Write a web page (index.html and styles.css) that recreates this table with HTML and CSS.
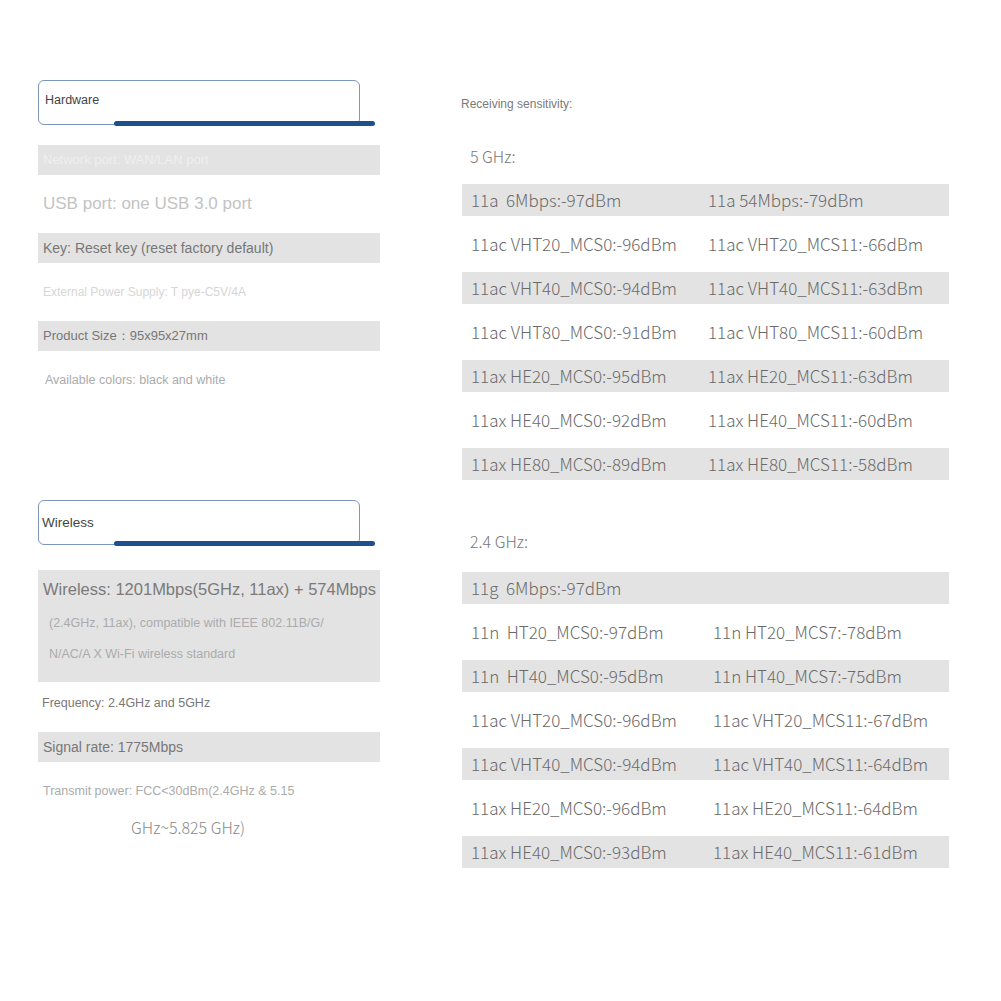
FILE: index.html
```html
<!DOCTYPE html>
<html lang="en">
	<head>
		<meta charset="utf-8">
		<title>Specifications</title>
		<link rel="stylesheet" href="styles.css">
	</head>
	<body>

		<div id="page">

			<div class="leftCol">

				<div class="sectionHead">
					<div class="headBox">Hardware</div>
					<div class="headBar"></div>
				</div>

				<div class="specs">
					<div class="row gray ghost">Network port: WAN/LAN port</div>
					<div class="row big pale">USB port: one USB 3.0 port</div>
					<div class="row gray mid">Key: Reset key (reset factory default)</div>
					<div class="row small faint">External Power Supply: T pye-C5V/4A</div>
					<div class="row gray">Product Size：95x95x27mm</div>
					<div class="row soft indent">Available colors: black and white</div>
				</div>

				<div class="sectionHead wireless">
					<div class="headBox tight">Wireless</div>
					<div class="headBar"></div>
				</div>

				<div class="wirelessBlock">
					<div class="wbLine first">Wireless: 1201Mbps(5GHz, 11ax) + 574Mbps</div>
					<div class="wbLine">(2.4GHz, 11ax), compatible with IEEE 802.11B/G/</div>
					<div class="wbLine">N/AC/A X Wi-Fi wireless standard</div>
				</div>

				<div class="specs2">
					<div class="row plain">Frequency: 2.4GHz and 5GHz</div>
					<div class="row gray mid">Signal rate: 1775Mbps</div>
					<div class="row soft">Transmit power: FCC&lt;30dBm(2.4GHz &amp; 5.15</div>
					<div class="tail">GHz~5.825 GHz)</div>
				</div>

			</div>

			<div class="rightCol">

				<div class="recv">Receiving sensitivity:</div>

				<div class="band">5 GHz:</div>
				<div class="table">
					<div class="tr gray"><span>11a&nbsp; 6Mbps:-97dBm</span><span>11a 54Mbps:-79dBm</span></div>
					<div class="tr"><span>11ac VHT20_MCS0:-96dBm</span><span>11ac VHT20_MCS11:-66dBm</span></div>
					<div class="tr gray"><span>11ac VHT40_MCS0:-94dBm</span><span>11ac VHT40_MCS11:-63dBm</span></div>
					<div class="tr"><span>11ac VHT80_MCS0:-91dBm</span><span>11ac VHT80_MCS11:-60dBm</span></div>
					<div class="tr gray"><span>11ax HE20_MCS0:-95dBm</span><span>11ax HE20_MCS11:-63dBm</span></div>
					<div class="tr"><span>11ax HE40_MCS0:-92dBm</span><span>11ax HE40_MCS11:-60dBm</span></div>
					<div class="tr gray"><span>11ax HE80_MCS0:-89dBm</span><span>11ax HE80_MCS11:-58dBm</span></div>
				</div>

				<div class="band second">2.4 GHz:</div>
				<div class="table wide">
					<div class="tr gray"><span>11g&nbsp; 6Mbps:-97dBm</span><span></span></div>
					<div class="tr"><span>11n&nbsp; HT20_MCS0:-97dBm</span><span>11n HT20_MCS7:-78dBm</span></div>
					<div class="tr gray"><span>11n&nbsp; HT40_MCS0:-95dBm</span><span>11n HT40_MCS7:-75dBm</span></div>
					<div class="tr"><span>11ac VHT20_MCS0:-96dBm</span><span>11ac VHT20_MCS11:-67dBm</span></div>
					<div class="tr gray"><span>11ac VHT40_MCS0:-94dBm</span><span>11ac VHT40_MCS11:-64dBm</span></div>
					<div class="tr"><span>11ax HE20_MCS0:-96dBm</span><span>11ax HE20_MCS11:-64dBm</span></div>
					<div class="tr gray"><span>11ax HE40_MCS0:-93dBm</span><span>11ax HE40_MCS11:-61dBm</span></div>
				</div>

			</div>

		</div>

	</body>
</html>
```

FILE: styles.css
```css
body{
	margin: 0;
	padding: 0;
	background-color: #fff;
	font-family: "Liberation Sans", Arial, sans-serif;
	color: #777;
}

#page{
	display: flex;
	padding-left: 38px;
}

.leftCol{
	width: 342px;
	padding-top: 80px;
}

.rightCol{
	width: 487px;
	margin-left: 82px;
	padding-top: 97px;
}

/* section titles */
.sectionHead{
	position: relative;
	height: 45px;
	margin-bottom: 20px;
}

.headBox{
	box-sizing: border-box;
	width: 322px;
	height: 45px;
	border: 1.5px solid #7d96bb;
	border-radius: 6px;
	padding: 12px 0 0 6px;
	font-size: 12.5px;
	color: #444;
}

.headBox.tight{
	padding: 14px 0 0 3px;
	font-size: 13.5px;
}

.headBar{
	position: absolute;
	left: 76px;
	top: 41px;
	width: 261px;
	height: 5px;
	border-radius: 3px;
	background-color: #1e4f8e;
}

.sectionHead.wireless{
	margin-top: 105px;
	margin-bottom: 25px;
}

/* spec rows */
.row{
	height: 30px;
	line-height: 30px;
	margin-bottom: 14px;
	padding-left: 5px;
	font-size: 13px;
	white-space: nowrap;
}

.gray{
	background-color: #e3e3e3;
}

.ghost{
	color: #efefef;
	font-size: 13px;
}

.big{
	font-size: 17px;
}

.pale{
	color: #c3c3c3;
}

.mid{
	font-size: 14px;
	color: #777;
}

.small{
	font-size: 12px;
}

.faint{
	color: #d6d6d6;
}

.soft{
	color: #ababab;
	font-size: 12.5px;
}

.indent{
	padding-left: 7px;
}

.plain{
	font-size: 12.5px;
	color: #777;
	padding-left: 4px;
}

.wirelessBlock{
	height: 112px;
	background-color: #e3e3e3;
	padding-top: 4px;
	box-sizing: border-box;
}

.wbLine{
	padding-left: 11px;
	height: 31px;
	line-height: 31px;
	font-size: 12.5px;
	color: #ababab;
}

.wbLine.first{
	padding-left: 5px;
	height: 34px;
	line-height: 30px;
	font-size: 16.5px;
	color: #7a7a7a;
	white-space: nowrap;
}

.specs2{
	margin-top: 6px;
}

.tail{
	margin-top: -5px;
	padding-left: 93px;
	font-family: "Noto Sans CJK SC", "Noto Sans", sans-serif;
	font-weight: 300;
	font-size: 16px;
	color: #8a8a8a;
}

/* right side */
.recv{
	margin-left: -1px;
	font-size: 12px;
	color: #7a7a7a;
}

.band{
	margin-top: 33px;
	margin-bottom: 16px;
	padding-left: 8px;
	height: 24px;
	line-height: 24px;
	font-family: "Noto Sans CJK SC", "Noto Sans", sans-serif;
	font-weight: 300;
	font-size: 16px;
	color: #777;
}

.band.second{
	margin-top: 49px;
	margin-bottom: 19px;
}

.tr{
	display: grid;
	grid-template-columns: 237px 1fr;
	height: 32px;
	line-height: 32px;
	margin-bottom: 12px;
	padding-left: 9px;
	font-family: "Noto Sans CJK SC", "Noto Sans", sans-serif;
	font-weight: 300;
	font-size: 17px;
	color: #6a6a6a;
	white-space: nowrap;
}

.table.wide .tr{
	grid-template-columns: 242px 1fr;
}
```
